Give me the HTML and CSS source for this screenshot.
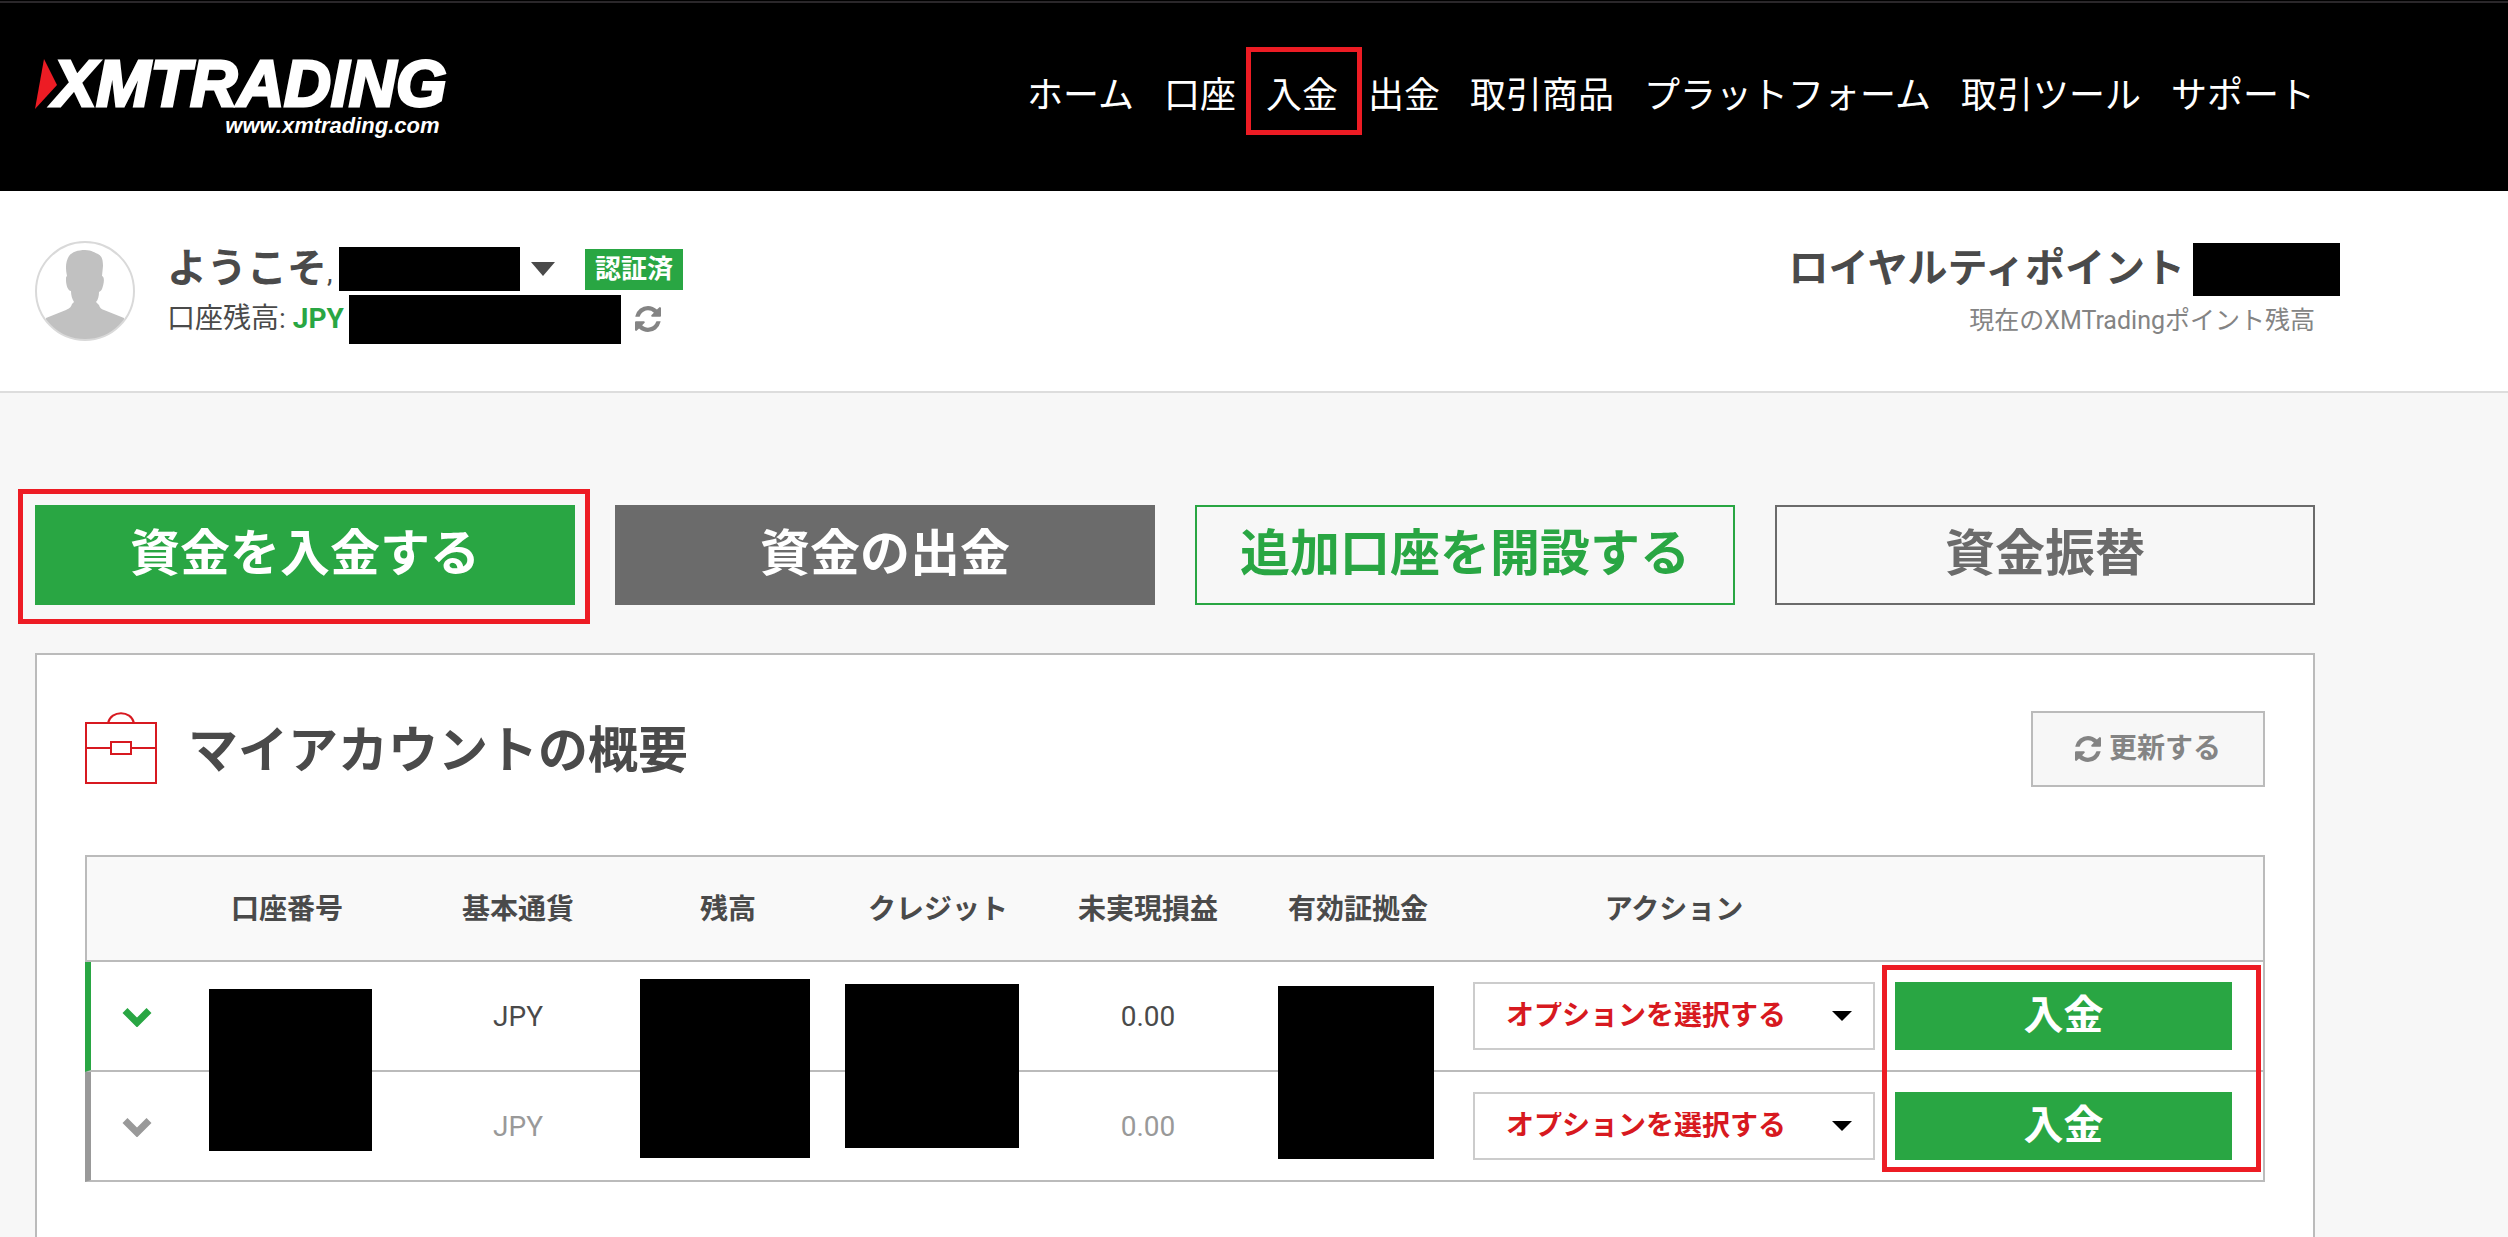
FILE: index.html
```html
<!DOCTYPE html>
<html lang="ja">
<head>
<meta charset="utf-8">
<title>XMTrading</title>
<link rel="stylesheet" href="styles.css">
</head>
<body>
<svg class="sprite" aria-hidden="true">
  <symbol id="refresh" viewBox="0 128 1536 1536"><path d="M1511 1056q0 5-1 7-64 268-268 434.500t-478 166.500q-146 0-282.500-55t-243.500-157l-129 129q-19 19-45 19t-45-19-19-45v-448q0-26 19-45t45-19h448q26 0 45 19t19 45-19 45l-137 137q71 66 161 102t187 36q134 0 250-65t186-179q11-17 53-117 8-23 30-23h192q13 0 22.500 9.500t9.500 22.500zm25-800v448q0 26-19 45t-45 19h-448q-26 0-45-19t-19-45 19-45l138-138q-148-137-349-137-134 0-250 65t-186 179q-11 17-53 117-8 23-30 23h-199q-13 0-22.500-9.500t-9.500-22.500v-7q65-268 270-434.500t480-166.500q146 0 284 55.500t245 156.500l130-129q19-19 45-19t45 19 19 45z"/></symbol>
  <symbol id="chevron" viewBox="0 0 30 20"><path d="M3 3.500 15 15.500 27 3.500" fill="none" stroke="currentColor" stroke-width="7"/></symbol>
</svg>

<header class="header">
  <a class="logo" href="#">
    <svg class="logo-mark" viewBox="0 0 22 50"><path d="M9 0 22 26 0 50Z" fill="#ed1c24"/></svg>
    <span class="logo-text">
      <span class="logo-name">XMTRADING</span>
      <span class="logo-url">www.xmtrading.com</span>
    </span>
  </a>
  <nav class="nav">
    <a href="#">ホーム</a>
    <a href="#">口座</a>
    <a href="#" class="marked">入金<span class="mark mark-nav"></span></a>
    <a href="#">出金</a>
    <a href="#">取引商品</a>
    <a href="#">プラットフォーム</a>
    <a href="#">取引ツール</a>
    <a href="#">サポート</a>
  </nav>
</header>

<section class="userbar">
  <svg class="avatar" viewBox="0 0 100 100">
    <defs><clipPath id="round"><circle cx="50" cy="50" r="49"/></clipPath></defs>
    <circle cx="50" cy="50" r="49" fill="#fff"/>
    <path clip-path="url(#round)" fill="#c1c1c1" d="M50 9C57 9 60 12 63 13 67 15 68 19 68 25L67 35C70 36 69 43 67 48 66 50 65 50 64 51 64 55 63 59 61 61L64 64C65 67 66 68 69 69L89 77V100H11V77L31 69C35 67 36 66 37 63L39 61C37 58 36 54 36 50 33 50 31 44 31 39 31 36 31 36 32 35 30 26 31 20 34 15 37 11 43 9 50 9Z"/>
    <circle cx="50" cy="50" r="49" fill="none" stroke="#d9d9d9" stroke-width="2"/>
  </svg>
  <div class="user">
    <div class="user-row">
      <span class="welcome">ようこそ<span class="comma">,</span></span>
      <span class="redact redact-name"></span>
      <button class="caret" aria-label="メニュー"></button>
      <span class="badge">認証済</span>
    </div>
    <div class="user-row balance">
      <span>口座残高: <strong>JPY</strong></span>
      <span class="redact redact-balance"></span>
      <button class="icon-button" aria-label="更新"><svg class="icon"><use href="#refresh"/></svg></button>
    </div>
  </div>
  <div class="loyalty">
    <div class="loyalty-title">ロイヤルティポイント<span class="redact redact-points"></span></div>
    <div class="loyalty-note">現在のXMTradingポイント残高</div>
  </div>
</section>

<main class="main">
  <div class="actions">
    <a href="#" class="action green">資金を入金する<span class="mark mark-action"></span></a>
    <a href="#" class="action gray">資金の出金</a>
    <a href="#" class="action green-line">追加口座を開設する</a>
    <a href="#" class="action gray-line">資金振替</a>
  </div>

  <section class="panel">
    <div class="panel-head">
      <svg class="briefcase" viewBox="0 0 72 74" fill="none" stroke="#d71920"><path stroke-width="2" d="M1 11H71V71H1ZM1 36H25M47 36H71M26 30H46V42H26Z"/><path stroke-width="2" d="M23 11C26-2 46-2 49 11"/></svg>
      <h1>マイアカウントの概要</h1>
      <button class="refresh"><svg class="icon"><use href="#refresh"/></svg>更新する</button>
    </div>

    <table class="accounts">
      <colgroup>
        <col class="c-toggle"><col class="c-number"><col class="c-value"><col class="c-value"><col class="c-value"><col class="c-value"><col class="c-value"><col class="c-option"><col>
      </colgroup>
      <thead>
        <tr><th></th><th>口座番号</th><th>基本通貨</th><th>残高</th><th>クレジット</th><th>未実現損益</th><th>有効証拠金</th><th>アクション</th><th></th></tr>
      </thead>
      <tbody>
        <tr class="active">
          <td><button class="toggle" aria-label="詳細"><svg><use href="#chevron"/></svg></button></td>
          <td><span class="cover cover-number"></span></td>
          <td>JPY</td>
          <td><span class="cover cover-balance"></span></td>
          <td><span class="cover cover-credit"></span></td>
          <td>0.00</td>
          <td><span class="cover cover-margin"></span></td>
          <td class="option"><div class="select"><select aria-label="アクション"><option>オプションを選択する</option></select></div></td>
          <td class="deposit"><button>入金</button><span class="mark mark-deposit"></span></td>
        </tr>
        <tr class="inactive">
          <td><button class="toggle" aria-label="詳細"><svg><use href="#chevron"/></svg></button></td>
          <td></td>
          <td>JPY</td>
          <td></td>
          <td></td>
          <td>0.00</td>
          <td></td>
          <td class="option"><div class="select"><select aria-label="アクション"><option>オプションを選択する</option></select></div></td>
          <td class="deposit"><button>入金</button></td>
        </tr>
      </tbody>
    </table>
  </section>
</main>
</body>
</html>
```
FILE: styles.css
```css
* { box-sizing: border-box; }

body {
  margin: 0;
  min-height: 100vh;
  display: flex;
  flex-direction: column;
  background: #f7f7f7;
  color: #4a4a4a;
  font-family: Roboto, "Noto Sans CJK JP", sans-serif;
  font-size: 28px;
  line-height: 1;
}

a { color: inherit; text-decoration: none; }

button, select {
  margin: 0;
  padding: 0;
  border: 0;
  border-radius: 0;
  background: none;
  color: inherit;
  font: inherit;
}

.sprite { position: absolute; width: 0; height: 0; }
.icon { display: block; width: 26px; height: 26px; fill: #848484; }

.header, .userbar, .main { padding-left: 35px; padding-right: 193px; }

/* Header */
.header {
  height: 191px;
  display: flex;
  align-items: center;
  justify-content: space-between;
  background: linear-gradient(#000 1px, #2a272a 1px, #2a272a 3px, #000 3px);
  color: #fff;
}

.logo { display: flex; align-items: flex-start; }
.logo-mark { width: 22px; height: 50px; margin-top: 5px; }
.logo-text {
  display: flex;
  flex-direction: column;
  align-items: flex-end;
  margin-left: -4px;
  font-family: "Liberation Sans", sans-serif;
  font-weight: 700;
  font-style: italic;
}
.logo-name { font-size: 65px; line-height: 60px; -webkit-text-stroke: 3px #fff; }
.logo-url { font-size: 22px; line-height: 24px; padding-right: 7px; }

.nav { display: flex; gap: 30px; font-size: 36px; line-height: 54px; white-space: nowrap; }
.marked { position: relative; }

.mark { position: absolute; border: 5px solid #ed1c24; pointer-events: none; }
.mark-nav { inset: -22px -24px -12px -20px; }
.mark-action { inset: -18px -17px -21px -19px; }
.mark-deposit { top: 3px; left: -3px; right: 2px; height: 207px; z-index: 2; }

/* User bar */
.userbar {
  height: 202px;
  display: flex;
  align-items: center;
  border-bottom: 2px solid #ddd;
  background: #fff;
}
.avatar { width: 100px; height: 100px; margin-right: 32px; }
.user { padding-top: 6px; }
.user-row { display: flex; align-items: center; height: 50px; white-space: nowrap; }
.welcome { font-size: 40px; font-weight: 700; width: 172px; }
.comma { font-size: 28px; font-weight: 400; }
.redact { display: inline-block; background: #000; }
.redact-name { width: 181px; height: 44px; }
.redact-balance { width: 272px; height: 49px; margin-left: 5px; }
.caret {
  margin-left: 11px;
  border: 12px solid transparent;
  border-top: 14px solid #4a4a4a;
  border-bottom: 0;
}
.badge {
  margin-left: 30px;
  padding: 0 10px;
  background: #29a643;
  color: #fff;
  font-size: 26px;
  font-weight: 700;
  line-height: 41px;
}
.balance strong { color: #29a643; }
.icon-button { margin-left: 14px; }

.loyalty { margin-left: auto; padding-top: 6px; text-align: right; white-space: nowrap; }
.loyalty-title { display: flex; align-items: center; gap: 8px; height: 54px; margin-right: -25px; font-size: 40px; font-weight: 700; }
.redact-points { width: 147px; height: 53px; }
.loyalty-note { color: #848484; font-size: 25px; line-height: 50px; }

/* Main */
.main { flex: 1; display: flex; flex-direction: column; padding-top: 112px; }

.actions { display: grid; grid-template-columns: repeat(4, 1fr); gap: 40px; margin-bottom: 48px; }
.action {
  position: relative;
  height: 100px;
  border: 2px solid;
  font-size: 50px;
  font-weight: 700;
  line-height: 94px;
  text-align: center;
}
.green { border-color: #29a643; background: #29a643; color: #fff; }
.gray { border-color: #6b6b6b; background: #6b6b6b; color: #fff; }
.green-line { color: #29a643; }
.gray-line { color: #6b6b6b; }

.panel { flex: 1; padding: 56px 48px 48px; border: 2px solid #bbb; border-bottom: 0; background: #fff; }
.panel-head { display: flex; align-items: center; height: 76px; margin-bottom: 68px; }
.briefcase { width: 72px; height: 74px; margin-right: 31px; }
h1 { margin: 0; padding-top: 4px; font-size: 50px; font-weight: 700; }
.refresh {
  display: flex;
  align-items: center;
  justify-content: center;
  gap: 8px;
  width: 234px;
  height: 76px;
  margin-left: auto;
  border: 2px solid #bbb;
  background: #f7f7f7;
  color: #848484;
  font-weight: 700;
}

/* Accounts table */
.accounts { width: 100%; table-layout: fixed; border-collapse: separate; border-spacing: 0; text-align: center; }
.c-toggle { width: 76px; }
.c-number { width: 252px; }
.c-value { width: 210px; }
.c-option { width: 422px; }

.accounts th, .accounts td { position: relative; padding: 2px 0 0; border-bottom: 2px solid #bbb; }
.accounts th { height: 107px; border-top: 2px solid #bbb; background: #f9f9f9; font-weight: 700; }
.accounts td { height: 110px; }
.accounts th:first-child { border-left: 2px solid #bbb; }
.accounts th:last-child, .accounts td:last-child { border-right: 2px solid #bbb; }
.active td:first-child { border-left: 6px solid #29a643; color: #29a643; }
.inactive td:first-child { border-left: 6px solid #999; }
.inactive { color: #999; }

.toggle { display: block; margin-left: 31px; }
.toggle svg { display: block; width: 30px; height: 20px; }

.cover { position: absolute; z-index: 1; background: #000; }
.cover-number { top: 27px; left: 48px; width: 163px; height: 162px; }
.cover-balance { top: 17px; left: 17px; width: 170px; height: 179px; }
.cover-credit { top: 22px; left: 12px; width: 174px; height: 164px; }
.cover-margin { top: 24px; left: 25px; width: 156px; height: 173px; }

.accounts .option { padding: 0 10px; }
.accounts .deposit { padding: 0 31px 0 10px; }
.select { position: relative; }
.select::after {
  content: "";
  position: absolute;
  top: 29px;
  right: 23px;
  border: 10px solid transparent;
  border-top-color: #000;
  border-bottom: 0;
  pointer-events: none;
}
.select select {
  display: block;
  width: 100%;
  height: 68px;
  padding-left: 31px;
  border: 2px solid #ccc;
  background: #fff;
  color: #d71920;
  font-weight: 700;
  appearance: none;
}
.deposit button {
  display: block;
  width: 100%;
  height: 68px;
  background: #29a643;
  color: #fff;
  font-size: 40px;
  font-weight: 700;
}
```
